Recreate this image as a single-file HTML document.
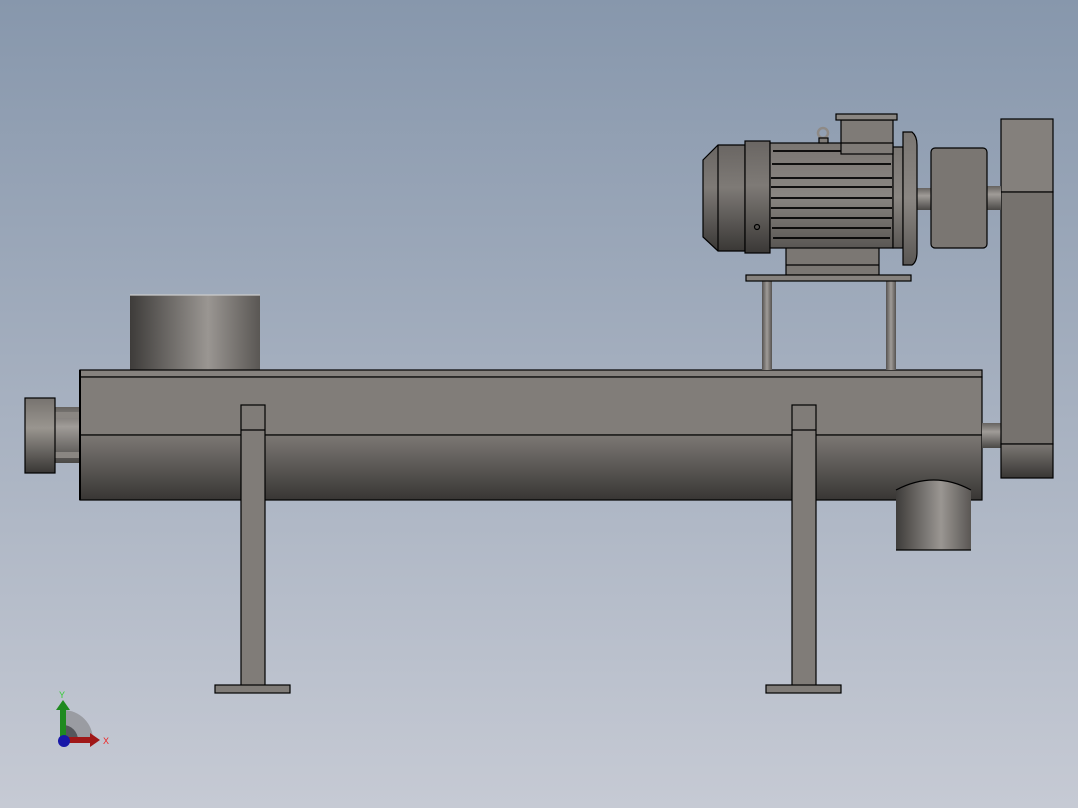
<!DOCTYPE html>
<html><head><style>html,body{margin:0;padding:0;width:1078px;height:808px;overflow:hidden}svg{display:block}</style></head>
<body>
<svg width="1078" height="808" viewBox="0 0 1078 808" xmlns="http://www.w3.org/2000/svg">
<defs>
<linearGradient id="bg" x1="0" y1="0" x2="0" y2="1"><stop offset="0" stop-color="#8797ac"/><stop offset="1" stop-color="#c6cad4"/></linearGradient>
<linearGradient id="hc" x1="0" y1="0" x2="0" y2="1"><stop offset="0" stop-color="#7c7874"/><stop offset="1" stop-color="#383634"/></linearGradient>
<linearGradient id="vc" x1="0" y1="0" x2="1" y2="0"><stop offset="0" stop-color="#3e3c3a"/><stop offset="0.6" stop-color="#9a9692"/><stop offset="1" stop-color="#5a5754"/></linearGradient>
<linearGradient id="disc" x1="0" y1="0" x2="0" y2="1"><stop offset="0" stop-color="#77736f"/><stop offset="0.4" stop-color="#99958f"/><stop offset="1" stop-color="#383634"/></linearGradient>
<linearGradient id="rod" x1="0" y1="0" x2="1" y2="0"><stop offset="0" stop-color="#555250"/><stop offset="0.5" stop-color="#a09c98"/><stop offset="1" stop-color="#555250"/></linearGradient>
<linearGradient id="hrod" x1="0" y1="0" x2="0" y2="1"><stop offset="0" stop-color="#666360"/><stop offset="0.35" stop-color="#a09c98"/><stop offset="1" stop-color="#4a4846"/></linearGradient>
<linearGradient id="mot" x1="0" y1="0" x2="0" y2="1"><stop offset="0" stop-color="#7a7672"/><stop offset="0.5" stop-color="#8a8682"/><stop offset="1" stop-color="#5a5754"/></linearGradient>
<linearGradient id="fan" x1="0" y1="0" x2="0" y2="1"><stop offset="0" stop-color="#6a6663"/><stop offset="0.4" stop-color="#7e7a76"/><stop offset="1" stop-color="#3a3836"/></linearGradient>
</defs>
<rect width="1078" height="808" fill="url(#bg)"/>
<g stroke="#000" stroke-width="1.2">
<rect x="130" y="295" width="130" height="75" fill="url(#vc)" stroke="none"/>
<line x1="130" y1="295" x2="260" y2="295" stroke="#ccc"/>
<rect x="55" y="407" width="26" height="56" fill="url(#hrod)" stroke="none"/>
<rect x="55" y="412" width="26" height="6" fill="#8a8682" stroke="none"/>
<rect x="55" y="452" width="26" height="6" fill="#8a8682" stroke="none"/>
<rect x="25" y="398" width="30" height="75" fill="url(#disc)"/>
<rect x="80" y="370" width="902" height="7" fill="#86827e"/>
<rect x="80" y="377" width="902" height="58" fill="#817d79"/>
<rect x="80" y="435" width="902" height="65" fill="url(#hc)"/>
<line x1="80" y1="370" x2="80" y2="500" stroke-width="2"/>
<path d="M896 500 L896 490 Q934 470 971 490 L971 550 L896 550 Z" fill="url(#vc)" stroke="none"/>
<path d="M896 490 Q934 470 971 490" fill="none"/>
<line x1="896" y1="550" x2="971" y2="550"/>
<rect x="241" y="405" width="24" height="281" fill="#807c78"/>
<line x1="241" y1="430" x2="265" y2="430"/>
<rect x="215" y="685" width="75" height="8" fill="#807c78"/>
<rect x="792" y="405" width="24" height="281" fill="#807c78"/>
<line x1="792" y1="430" x2="816" y2="430"/>
<rect x="766" y="685" width="75" height="8" fill="#807c78"/>
<rect x="982" y="423" width="19" height="25" fill="url(#hrod)" stroke="none"/>
<rect x="1001" y="119" width="52" height="73" fill="#84807c"/>
<rect x="1001" y="192" width="52" height="252" fill="#76726e"/>
<rect x="1001" y="444" width="52" height="34" fill="url(#hc)"/>
<rect x="762" y="281" width="10" height="89" fill="url(#rod)" stroke="none"/>
<rect x="886" y="281" width="10" height="89" fill="url(#rod)" stroke="none"/>
<rect x="917" y="188" width="14" height="22" fill="url(#hrod)" stroke="none"/>
<rect x="987" y="186" width="14" height="24" fill="url(#hrod)" stroke="none"/>
<rect x="931" y="148" width="56" height="100" rx="4" fill="#7a7672"/>
<rect x="786" y="245" width="93" height="30" fill="#7b7773"/>
<line x1="786" y1="265" x2="879" y2="265"/>
<rect x="746" y="275" width="165" height="6" fill="#86827e"/>
<path d="M718 145 L745 145 L745 251 L718 251 L703 237 L703 160 Z" fill="url(#fan)"/>
<line x1="718" y1="145" x2="718" y2="251"/>
<rect x="745" y="141" width="25" height="112" fill="url(#fan)"/>
<rect x="770" y="143" width="123" height="105" fill="url(#mot)"/>
<g stroke-width="1.8">
<line x1="773" y1="151" x2="890" y2="151"/><line x1="772" y1="164" x2="891" y2="164"/>
<line x1="771" y1="178" x2="892" y2="178"/><line x1="771" y1="187" x2="892" y2="187"/>
<line x1="771" y1="198" x2="892" y2="198"/><line x1="771" y1="208" x2="892" y2="208"/>
<line x1="771" y1="218" x2="892" y2="218"/><line x1="772" y1="228" x2="891" y2="228"/>
<line x1="773" y1="238" x2="890" y2="238"/>
</g>
<rect x="893" y="147" width="10" height="101" fill="url(#mot)"/>
<path d="M903 132 L912 132 Q917 136 917 145 L917 252 Q917 262 912 265 L903 265 Z" fill="url(#mot)"/>
<rect x="841" y="120" width="52" height="34" fill="#7f7b77"/>
<rect x="836" y="114" width="61" height="6" fill="#8a8682"/>
<line x1="841" y1="143" x2="893" y2="143"/>
<circle cx="823" cy="133" r="5" fill="none" stroke="#8e8a86" stroke-width="2.5"/>
<rect x="819" y="138" width="9" height="5" fill="#807c78"/>
<circle cx="757" cy="227" r="2.5" fill="none"/>
</g>
<path d="M63 710 A30 30 0 0 1 93 740 L63 740 Z" fill="#9a9ca2"/>
<path d="M63 725 A15 15 0 0 1 78 740 L63 740 Z" fill="#55575c"/>
<rect x="60" y="708" width="6" height="32" fill="#1f8a1f"/>
<path d="M56 710 L63 700 L70 710 Z" fill="#1f8a1f"/>
<rect x="63" y="737" width="28" height="6" fill="#a01818"/>
<path d="M90 733 L100 740 L90 747 Z" fill="#a01818"/>
<circle cx="64" cy="741" r="6" fill="#1818a8"/>
<text x="59" y="698" font-family="Liberation Sans, sans-serif" font-size="9" fill="#3c3">Y</text>
<text x="103" y="744" font-family="Liberation Sans, sans-serif" font-size="9" fill="#e22">X</text>
</svg>
</body></html>
